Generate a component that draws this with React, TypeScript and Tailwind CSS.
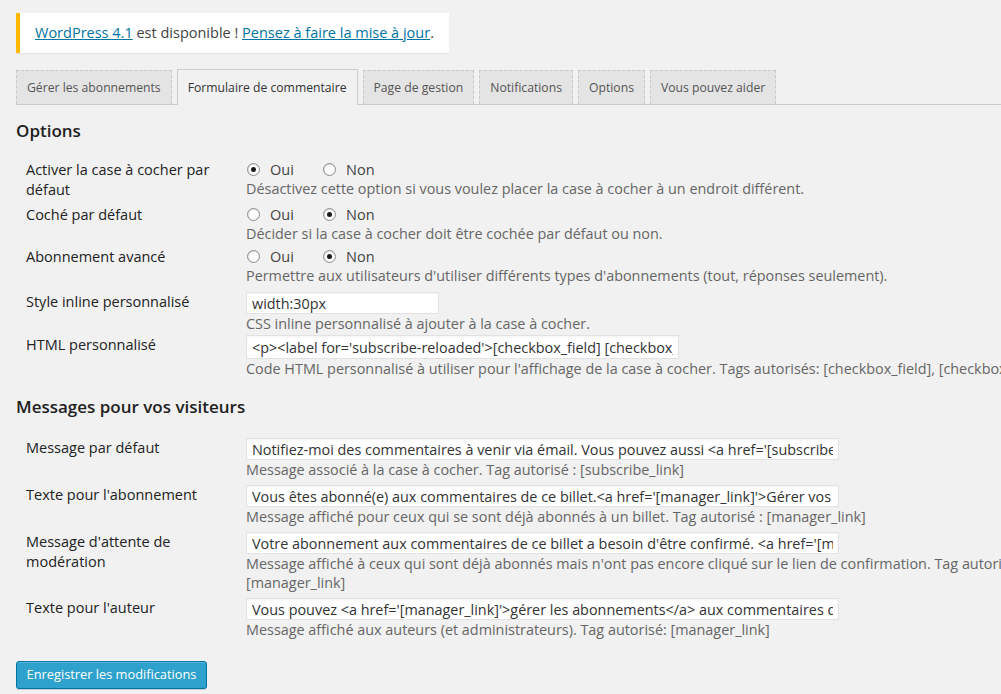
import React from "react";

const font = { fontFamily: '"Open Sans", "Noto Sans", sans-serif' };

function Radio({ checked }: { checked: boolean }) {
  return (
    <span className="relative inline-block w-[13px] h-[13px] rounded-full border border-[#8f8f8f] bg-gradient-to-br from-[#d8d8d8] to-white shrink-0">
      <span className="absolute inset-[1px] rounded-full bg-white" />
      {checked && <span className="absolute left-[3px] top-[3px] w-[5px] h-[5px] rounded-full bg-[#1a1a1a]" />}
    </span>
  );
}

function RadioRow({ label, yes, desc, mb }: { label: React.ReactNode; yes: boolean; desc: string; mb: string }) {
  return (
    <div className={`flex ${mb}`}>
      <div className="w-[230px] shrink-0 pl-[10px] pr-[20px] text-[14.5px] leading-[20px] text-[#222]">{label}</div>
      <div className="flex flex-col">
        <div className="flex items-center h-[19px] text-[14.5px] text-[#444]">
          <label className="flex items-center w-[77px] pl-[1px]">
            <Radio checked={yes} />
            <span className="ml-[10px]">Oui</span>
          </label>
          <label className="flex items-center">
            <Radio checked={!yes} />
            <span className="ml-[10px]">Non</span>
          </label>
        </div>
        <div className="text-[14.4px] leading-[19px] text-[#666] whitespace-nowrap">{desc}</div>
      </div>
    </div>
  );
}

function InputRow({
  label,
  value,
  width,
  height,
  desc,
  mb,
}: {
  label: React.ReactNode;
  value: string;
  width: string;
  height: string;
  desc: React.ReactNode;
  mb: string;
}) {
  return (
    <div className={`flex ${mb}`}>
      <div className="w-[230px] shrink-0 pl-[10px] pr-[20px] text-[14.5px] leading-[20px] text-[#222]">{label}</div>
      <div className="flex flex-col">
        <input
          readOnly
          value={value}
          className={`${width} ${height} bg-white border border-[#e2e2e2] shadow-[inset_0_1px_2px_rgba(0,0,0,0.05)] px-[5px] text-[14.4px] text-[#333] outline-none`}
        />
        <div className="text-[14.4px] leading-[19px] text-[#666] whitespace-nowrap">{desc}</div>
      </div>
    </div>
  );
}

const tabs = [
  "Gérer les abonnements",
  "Formulaire de commentaire",
  "Page de gestion",
  "Notifications",
  "Options",
  "Vous pouvez aider",
];

export default function App() {
  return (
    <div className="w-[1001px] h-[694px] overflow-hidden bg-[#f1f1f1]" style={font}>
      <div className="pl-4 pt-[13px]">
        <div className="w-[433px] h-[40px] bg-white border-l-4 border-[#ffba00] shadow-[0_1px_1px_rgba(0,0,0,0.06)] flex items-center pl-[15px] text-[14.5px] text-[#444]">
          <span>
            <a className="text-[#0074a2] underline">WordPress 4.1</a> est disponible !{" "}
            <a className="text-[#0074a2] underline">Pensez à faire la mise à jour</a>.
          </span>
        </div>

        <div className="mt-[17px] flex items-end gap-[5px] border-b border-[#ccc] h-[35px]">
          {tabs.map((t, i) =>
            i === 1 ? (
              <div
                key={t}
                className="h-[36px] -mb-px px-[10px] pt-[1px] flex items-center bg-[#f1f1f1] border border-b-0 border-[#ccc] text-[12.2px] text-[#333]"
              >
                {t}
              </div>
            ) : (
              <div
                key={t}
                className="h-[34px] px-[10px] pt-[1px] flex items-center bg-[#e4e4e4] border border-b-0 border-dashed border-[#c8c8c8] text-[12.2px] text-[#555]"
              >
                {t}
              </div>
            )
          )}
        </div>

        <h2 className="mt-[14px] text-[17px] leading-[24px] font-semibold text-[#222]">Options</h2>

        <div className="mt-[17px]">
          <RadioRow
            label="Activer la case à cocher par défaut"
            yes={true}
            mb="mb-[5px]"
            desc="Désactivez cette option si vous voulez placer la case à cocher à un endroit différent."
          />
          <RadioRow
            label="Coché par défaut"
            yes={false}
            mb="mb-[4px]"
            desc="Décider si la case à cocher doit être cochée par défaut ou non."
          />
          <RadioRow
            label="Abonnement avancé"
            yes={false}
            mb="mb-[7px]"
            desc="Permettre aux utilisateurs d'utiliser différents types d'abonnements (tout, réponses seulement)."
          />
          <InputRow
            label="Style inline personnalisé"
            value="width:30px"
            width="w-[193px]"
            height="h-[22px]"
            desc="CSS inline personnalisé à ajouter à la case à cocher."
            mb="mb-[2px]"
          />
          <InputRow
            label="HTML personnalisé"
            value="<p><label for='subscribe-reloaded'>[checkbox_field] [checkbox_label]</label></p>"
            width="w-[433px]"
            height="h-[24px]"
            desc="Code HTML personnalisé à utiliser pour l'affichage de la case à cocher. Tags autorisés: [checkbox_field], [checkbox_label]"
            mb="mb-0"
          />
        </div>

        <h2 className="mt-[17px] text-[17px] leading-[24px] font-semibold text-[#222]">
          Messages pour vos visiteurs
        </h2>

        <div className="mt-[19px]">
          <InputRow
            label="Message par défaut"
            value="Notifiez-moi des commentaires à venir via émail. Vous pouvez aussi <a href='[subscribe_link]'>vous abonner</a> sans commenter."
            width="w-[593px]"
            height="h-[22px]"
            desc="Message associé à la case à cocher. Tag autorisé : [subscribe_link]"
            mb="mb-[6px]"
          />
          <InputRow
            label="Texte pour l'abonnement"
            value="Vous êtes abonné(e) aux commentaires de ce billet.<a href='[manager_link]'>Gérer vos abonnements</a>."
            width="w-[593px]"
            height="h-[22px]"
            desc="Message affiché pour ceux qui se sont déjà abonnés à un billet. Tag autorisé : [manager_link]"
            mb="mb-[6px]"
          />
          <InputRow
            label={
              <>
                Message d'attente de
                <br />
                modération
              </>
            }
            value="Votre abonnement aux commentaires de ce billet a besoin d'être confirmé. <a href='[manager_link]'>En savoir plus</a>."
            width="w-[593px]"
            height="h-[22px]"
            desc={
              <>
                Message affiché à ceux qui sont déjà abonnés mais n'ont pas encore cliqué sur le lien de confirmation. Tag autorisé :
                <br />
                [manager_link]
              </>
            }
            mb="mb-[6px]"
          />
          <InputRow
            label="Texte pour l'auteur"
            value="Vous pouvez <a href='[manager_link]'>gérer les abonnements</a> aux commentaires de ce billet."
            width="w-[593px]"
            height="h-[22px]"
            desc="Message affiché aux auteurs (et administrateurs). Tag autorisé: [manager_link]"
            mb="mb-0"
          />
        </div>

        <button className="mt-[22px] h-[28px] w-[191px] rounded-[3px] bg-[#2ea2cc] border border-[#0074a2] shadow-[inset_0_1px_0_rgba(120,200,230,0.5),0_1px_0_rgba(0,0,0,0.15)] text-white text-[12.8px]">
          Enregistrer les modifications
        </button>
      </div>
    </div>
  );
}
